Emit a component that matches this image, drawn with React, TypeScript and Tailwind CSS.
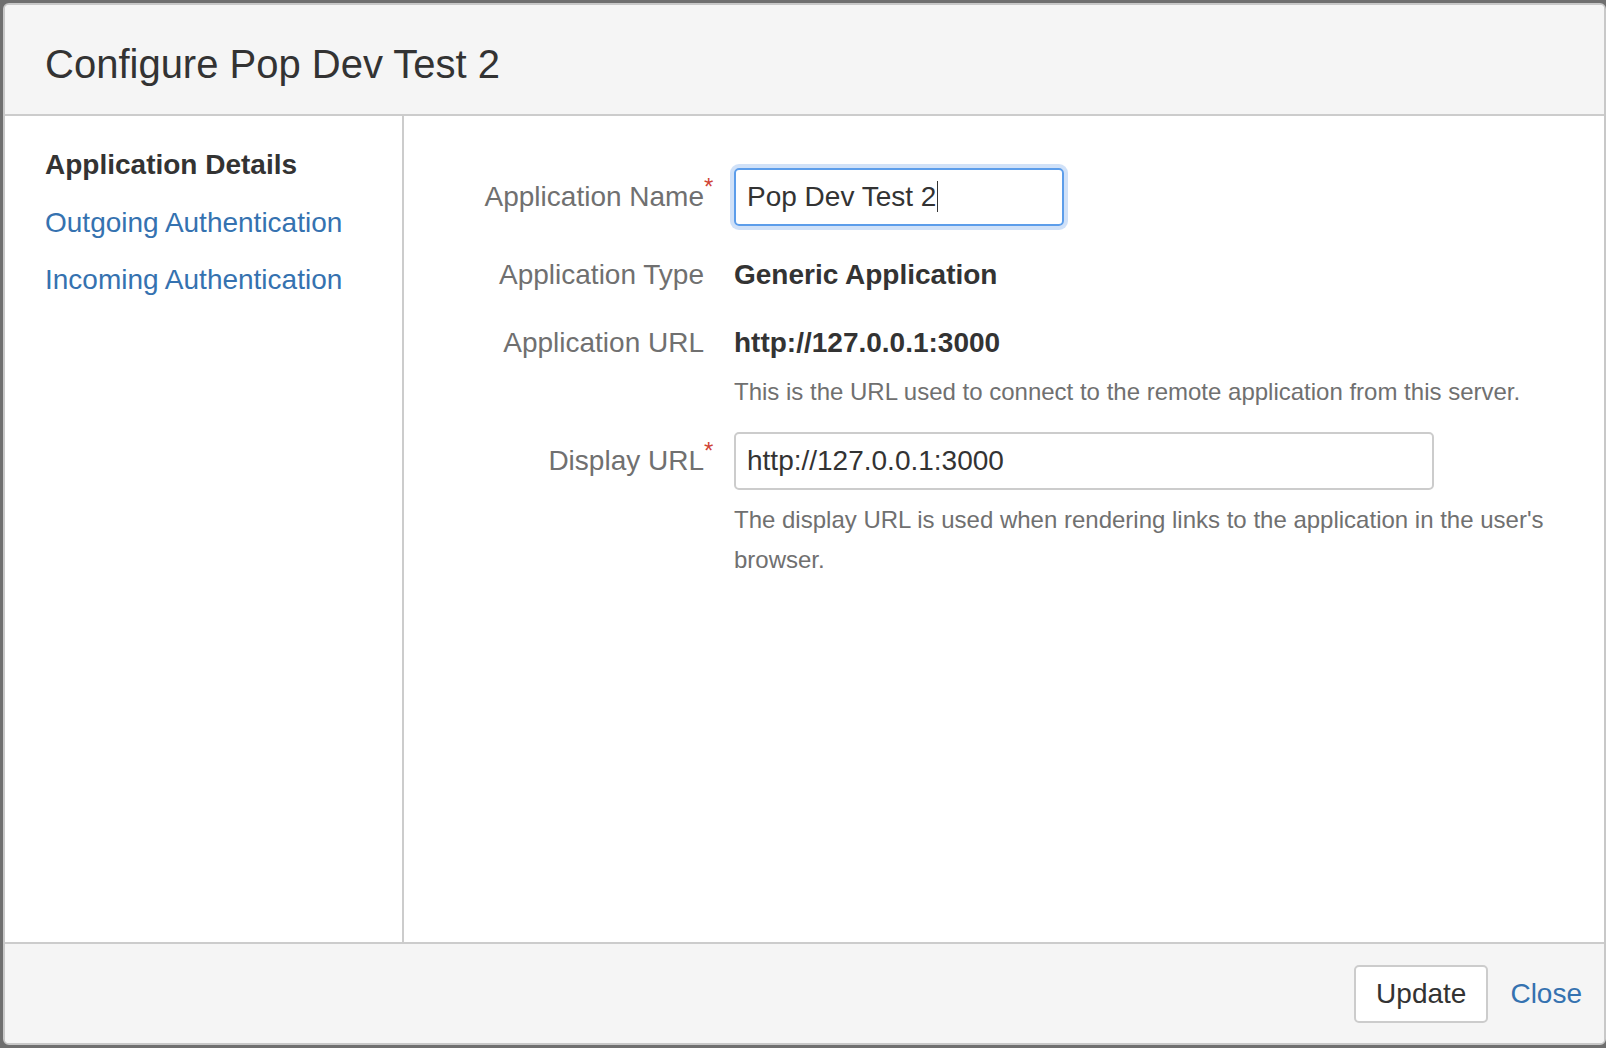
import React from 'react';

const navItems = [
  { label: 'Application Details', active: true },
  { label: 'Outgoing Authentication', active: false },
  { label: 'Incoming Authentication', active: false },
];

const Required: React.FC = () => (
  <span className="absolute left-full top-[7px] text-[24px] leading-none text-[#d04437]">*</span>
);

const App: React.FC = () => {
  return (
    <div className="h-screen w-full overflow-hidden bg-[#6f6f6f] pl-[3px] pt-[3px] font-['Liberation_Sans',Arial,sans-serif] text-[#333333]">
      <div className="flex h-[1042px] w-[1603px] flex-col overflow-hidden rounded-[6px] border-2 border-[#c8c8c8] bg-white">
        {/* Header */}
        <div className="h-[111px] shrink-0 border-b-2 border-[#cccccc] bg-[#f5f5f5] pl-[40px] pt-[29px]">
          <h2 className="text-[40px] leading-[60px] font-normal text-[#333333]">Configure Pop Dev Test 2</h2>
        </div>

        {/* Body */}
        <div className="flex flex-1">
          <div className="w-[399px] shrink-0 border-r-2 border-[#cccccc] pl-[40px] pt-[20px]">
            {navItems.map(item => (
              <div
                key={item.label}
                className={
                  item.active
                    ? 'text-[28px] leading-[57.5px] font-bold text-[#333333]'
                    : 'text-[28px] leading-[57.5px] text-[#3572b0]'
                }
              >
                {item.label}
              </div>
            ))}
          </div>

          <div className="flex-1 pl-[40px] pr-[40px] pt-[52px] text-[28px]">
            {/* Application Name */}
            <div className="flex">
              <div className="relative w-[260px] shrink-0 text-right leading-[58px] text-[#707070]">
                Application Name
                <Required />
              </div>
              <div className="ml-[30px]">
                <div className="h-[58px] w-[330px] rounded-[5px] border-2 border-[#5c9dea] pl-[11px] leading-[54px] text-[#333333] shadow-[0_0_0_4px_rgba(120,170,235,0.35)]">
                  Pop Dev Test 2
                  <span className="ml-[1px] inline-block h-[31px] w-px bg-[#333333] align-[-6px]"></span>
                </div>
              </div>
            </div>

            {/* Application Type */}
            <div className="mt-[29px] flex">
              <div className="w-[260px] shrink-0 text-right leading-[40px] text-[#707070]">Application Type</div>
              <div className="ml-[30px] leading-[40px] font-bold text-[#333333]">Generic Application</div>
            </div>

            {/* Application URL */}
            <div className="mt-[28px] flex">
              <div className="w-[260px] shrink-0 text-right leading-[40px] text-[#707070]">Application URL</div>
              <div className="ml-[30px] flex-1">
                <div className="leading-[40px] font-bold text-[#333333]">http://127.0.0.1:3000</div>
                <p className="mt-[9px] text-[24px] leading-[40px] text-[#707070]">
                  This is the URL used to connect to the remote application from this server.
                </p>
              </div>
            </div>

            {/* Display URL */}
            <div className="mt-[20px] flex">
              <div className="relative w-[260px] shrink-0 text-right leading-[58px] text-[#707070]">
                Display URL
                <Required />
              </div>
              <div className="ml-[30px] flex-1">
                <input
                  readOnly
                  value="http://127.0.0.1:3000"
                  className="block h-[58px] w-[700px] rounded-[5px] border-2 border-[#cccccc] bg-white pl-[11px] text-[28px] leading-[54px] text-[#333333] outline-none"
                />
                <p className="mt-[10px] text-[24px] leading-[40px] text-[#707070]">
                  The display URL is used when rendering links to the application in the user's browser.
                </p>
              </div>
            </div>
          </div>
        </div>

        {/* Footer */}
        <div className="flex h-[101px] shrink-0 items-center justify-end gap-[22px] border-t-2 border-[#cccccc] bg-[#f5f5f5] pr-[22px]">
          <button className="h-[58px] rounded-[5px] border-2 border-[#cccccc] bg-white px-[20px] text-[28px] text-[#333333]">
            Update
          </button>
          <a href="#" className="text-[28px] text-[#3572b0]">
            Close
          </a>
        </div>
      </div>
    </div>
  );
};

export default App;
